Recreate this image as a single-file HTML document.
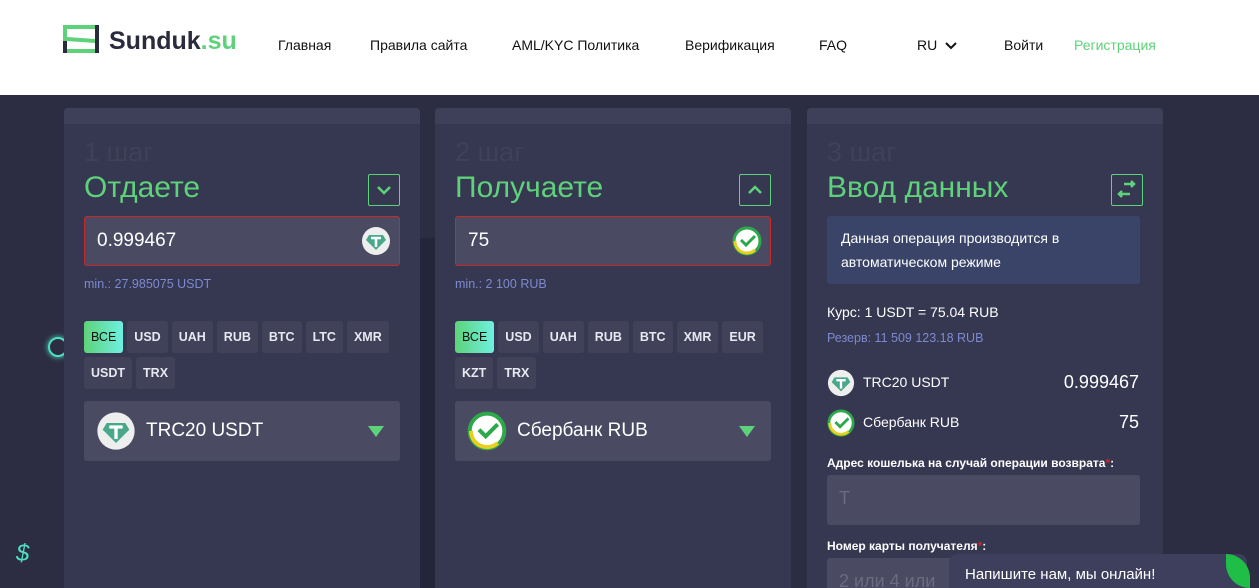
<!DOCTYPE html>
<html><head><meta charset="utf-8"><style>
*{box-sizing:border-box;margin:0;padding:0}
html,body{width:1259px;height:588px;overflow:hidden}
body{background:#2c2d42;font-family:"Liberation Sans","Noto Sans CJK SC",sans-serif;position:relative}
.hdr{position:absolute;left:0;top:0;width:1259px;height:95px;background:#fff}
.nav{position:absolute;top:37px;font-size:14px;color:#111}
.panel{position:absolute;top:108px;width:356px;height:480px;background:#363750;border-radius:4px 4px 0 0;overflow:hidden}
.panel .bar{height:16px;background:#3e3f58}
.step{position:absolute;left:20px;top:29px;font-size:27px;color:#3f4059}
.ttl{position:absolute;left:20px;top:63px;font-size:30px;color:#5ed27a}
.tbtn{position:absolute;right:20px;top:66px;width:32px;height:32px;border:1px solid #5ed27a;border-radius:2px}
.inp{position:absolute;left:20px;top:108px;width:316px;height:50px;background:#4a4b63;border:1px solid #c8282a;border-radius:3px;color:#fff;font-size:19px;padding:13px 12px}
.min{position:absolute;left:20px;top:169px;font-size:12.5px;color:#7c8ad0}
.chips{position:absolute;left:20px;top:213px;width:320px;display:flex;flex-wrap:wrap;gap:4px}
.chip{height:32px;line-height:32px;padding:0 7px;background:#41425a;color:#e8e8f0;font-size:12.5px;border-radius:3px;font-weight:bold}
.chip.on{background:linear-gradient(90deg,#5ed27a,#6ef0e0);color:#111;font-weight:normal}
.sel{position:absolute;left:20px;top:293px;width:316px;height:60px;background:#4a4b63;border-radius:3px;color:#fff;font-size:19px}
.sel .ic{position:absolute;left:12px;top:10px;width:40px;height:40px}
.sel span{position:absolute;left:62px;top:19px}
.tri{position:absolute;right:16px;top:25px;width:0;height:0;border-left:8px solid transparent;border-right:8px solid transparent;border-top:11px solid #5ed27a}
.r{color:#fff;font-size:14px;position:absolute}
</style></head><body>
<div class="hdr">
<svg style="position:absolute;left:63px;top:25px" width="36" height="28" viewBox="0 0 36 28"><rect x="0" y="0" width="36" height="4" fill="#5ed27a"/><rect x="0" y="24" width="36" height="4" fill="#5ed27a"/><rect x="0" y="0" width="4" height="16" fill="#5ed27a"/><rect x="32" y="12" width="4" height="16" fill="#2a2b3d"/><rect x="0" y="16" width="4" height="12" fill="#2a2b3d"/><rect x="32" y="0" width="4" height="12" fill="#2a2b3d"/><polygon points="4,12 32,14 32,18 4,16" fill="#5ed27a"/></svg>
<div style="position:absolute;left:109px;top:27px;font-size:25px;font-weight:bold;color:#2a2b3d">Sunduk<span style="color:#5ed27a">.su</span></div>
<div class="nav" style="left:278px">Главная</div>
<div class="nav" style="left:370px">Правила сайта</div>
<div class="nav" style="left:512px">AML/KYC Политика</div>
<div class="nav" style="left:685px">Верификация</div>
<div class="nav" style="left:819px">FAQ</div>
<div class="nav" style="left:917px">RU <svg width="12" height="8" viewBox="0 0 12 8" style="margin-left:4px"><path d="M1 1l5 5 5-5" stroke="#111" stroke-width="2" fill="none"/></svg></div>
<div class="nav" style="left:1004px">Войти</div>
<div class="nav" style="left:1074px;color:#5ed27a">Регистрация</div>
</div>
<div style="position:absolute;left:420px;top:238px;width:15px;height:350px;background:#24253a"></div>
<div style="position:absolute;left:48px;top:337px;width:20px;height:20px;border:2px solid #4fe0c0;border-radius:50%;box-shadow:0 0 6px #4fe0c0"></div>
<div style="position:absolute;left:392px;top:490px;width:20px;height:20px;border:2px solid #3a6a6a;border-radius:50%"></div>
<div style="position:absolute;left:16px;top:540px;color:#4fe0c0;font-size:24px;font-style:italic">$</div>

<div class="panel" style="left:64px"><div class="bar"></div>
<div class="step">1 шаг</div><div class="ttl">Отдаете</div>
<div class="tbtn"><svg width="30" height="30" viewBox="0 0 30 30"><path d="M9 12l6 6 6-6" stroke="#5ed27a" stroke-width="2.5" fill="none"/></svg></div>
<div class="inp">0.999467<svg style="position:absolute;right:8px;top:9px" width="30" height="30" viewBox="0 0 30 30"><circle cx="15" cy="15" r="14" fill="#eee"/><polygon points="8,9 22,9 25,14 15,24 5,14" fill="#4aa88a"/><path d="M10 12h10M15 12v9" stroke="#fff" stroke-width="2.5"/></svg></div>
<div class="min">min.: 27.985075 USDT</div>
<div class="chips"><div class="chip on">ВСЕ</div><div class="chip">USD</div><div class="chip">UAH</div><div class="chip">RUB</div><div class="chip">BTC</div><div class="chip">LTC</div><div class="chip">XMR</div><div class="chip">USDT</div><div class="chip">TRX</div></div>
<div class="sel"><svg class="ic" viewBox="0 0 30 30"><circle cx="15" cy="15" r="14" fill="#eee"/><polygon points="8,9 22,9 25,14 15,24 5,14" fill="#4aa88a"/><path d="M10 12h10M15 12v9" stroke="#fff" stroke-width="2.5"/></svg><span>TRC20 USDT</span><div class="tri"></div></div>
</div>

<div class="panel" style="left:435px"><div class="bar"></div>
<div class="step">2 шаг</div><div class="ttl">Получаете</div>
<div class="tbtn"><svg width="30" height="30" viewBox="0 0 30 30"><path d="M9 18l6-6 6 6" stroke="#5ed27a" stroke-width="2.5" fill="none"/></svg></div>
<div class="inp">75<svg style="position:absolute;right:8px;top:9px" width="30" height="30" viewBox="0 0 30 30"><circle cx="15" cy="15" r="13" fill="#fff" stroke="#2da84a" stroke-width="3"/><path d="M3 15a12 12 0 0 0 20 9" stroke="#e8d020" stroke-width="3" fill="none"/><path d="M9 14l5 5 9-9" stroke="#2da84a" stroke-width="3" fill="none"/></svg></div>
<div class="min">min.: 2 100 RUB</div>
<div class="chips"><div class="chip on">ВСЕ</div><div class="chip">USD</div><div class="chip">UAH</div><div class="chip">RUB</div><div class="chip">BTC</div><div class="chip">XMR</div><div class="chip">EUR</div><div class="chip">KZT</div><div class="chip">TRX</div></div>
<div class="sel"><svg class="ic" viewBox="0 0 30 30"><circle cx="15" cy="15" r="13" fill="#fff" stroke="#2da84a" stroke-width="3"/><path d="M3 15a12 12 0 0 0 20 9" stroke="#e8d020" stroke-width="3" fill="none"/><path d="M9 14l5 5 9-9" stroke="#2da84a" stroke-width="3" fill="none"/></svg><span>Сбербанк RUB</span><div class="tri"></div></div>
</div>

<div class="panel" style="left:807px"><div class="bar"></div>
<div class="step">3 шаг</div><div class="ttl">Ввод данных</div>
<div class="tbtn"><svg width="30" height="30" viewBox="0 0 30 30"><path d="M12 9h10M19 6l3 3-3 3M18 19H7M10 16l-3 3 3 3" stroke="#5ed27a" stroke-width="2.5" fill="none"/></svg></div>
<div style="position:absolute;left:20px;top:108px;width:313px;height:68px;background:#3a4468;border-radius:3px;color:#fff;font-size:14px;line-height:24px;padding:10px 14px">Данная операция производится в автоматическом режиме</div>
<div class="r" style="left:20px;top:196px">Курс: 1 USDT = 75.04 RUB</div>
<div style="position:absolute;left:20px;top:223px;font-size:12.5px;color:#7c8ad0">Резерв: 11 509 123.18 RUB</div>
<svg style="position:absolute;left:20px;top:261px" width="28" height="28" viewBox="0 0 30 30"><circle cx="15" cy="15" r="14" fill="#eee"/><polygon points="8,9 22,9 25,14 15,24 5,14" fill="#4aa88a"/><path d="M10 12h10M15 12v9" stroke="#fff" stroke-width="2.5"/></svg>
<div class="r" style="left:56px;top:266px">TRC20 USDT</div>
<div class="r" style="right:24px;top:264px;font-size:18px">0.999467</div>
<svg style="position:absolute;left:20px;top:301px" width="28" height="28" viewBox="0 0 30 30"><circle cx="15" cy="15" r="13" fill="#fff" stroke="#2da84a" stroke-width="3"/><path d="M3 15a12 12 0 0 0 20 9" stroke="#e8d020" stroke-width="3" fill="none"/><path d="M9 14l5 5 9-9" stroke="#2da84a" stroke-width="3" fill="none"/></svg>
<div class="r" style="left:56px;top:306px">Сбербанк RUB</div>
<div class="r" style="right:24px;top:304px;font-size:18px">75</div>
<div class="r" style="left:20px;top:348px;font-size:12px;font-weight:bold">Адрес кошелька на случай операции возврата<span style="color:#c8282a">*</span>:</div>
<div style="position:absolute;left:20px;top:367px;width:313px;height:50px;background:#4a4b63;border-radius:3px;color:#6a6b80;font-size:18px;padding:13px 12px">T</div>
<div class="r" style="left:20px;top:431px;font-size:12px;font-weight:bold">Номер карты получателя<span style="color:#c8282a">*</span>:</div>
<div style="position:absolute;left:20px;top:450px;width:313px;height:50px;background:#4a4b63;border-radius:3px;color:#6a6b80;font-size:18px;padding:13px 12px">2 или 4 или</div>
</div>
<div style="position:absolute;left:949px;top:554px;width:298px;height:34px;background:#3d3f5c;border-radius:8px 8px 0 0;color:#fff;font-size:15px;padding:12px 16px;overflow:hidden">Напишите нам, мы онлайн!</div>
<div style="position:absolute;left:1226px;top:554px;width:24px;height:34px;background:#1fbf47;border-radius:0 24px 0 24px"></div>
</body></html>
